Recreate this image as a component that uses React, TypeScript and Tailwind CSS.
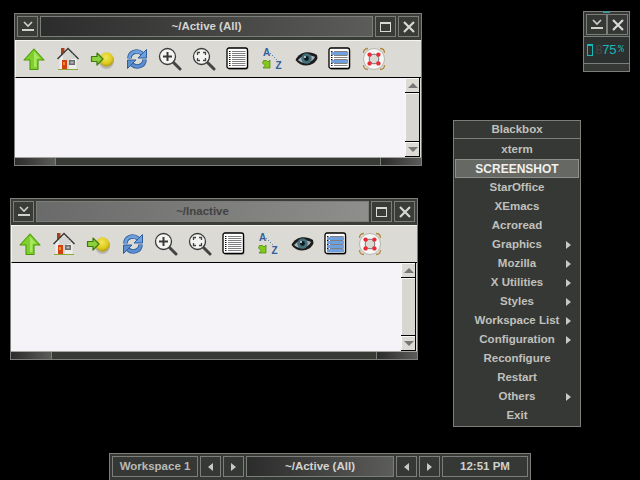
import React from "react";

const Up = () => (
  <svg width="24" height="24" viewBox="0 0 24 24">
    <path d="M12 2 L22 13 H16 V22.5 H8 V13 H2 Z" fill="#7fd02c" stroke="#4e9a06" strokeWidth="1.1" strokeLinejoin="round" />
    <path d="M12 4.5 L18 11.5 H14.5 V20 H12 Z" fill="#a8e860" />
  </svg>
);

const Home = () => (
  <svg width="24" height="24" viewBox="0 0 24 24">
    <rect x="5" y="1" width="3.5" height="7" fill="#a9401c" />
    <path d="M3.5 11 V22 H20.5 V11 L12 2.5 Z" fill="#ececea" />
    <path d="M1.5 12 L12 1.5 L22.5 12" fill="none" stroke="#3c3c3c" strokeWidth="1.5" />
    <path d="M8 6v7M10 5v8M12 4v18M14 5v8M16 6v6M18 8v4" stroke="#b4b4b0" strokeWidth="0.8" />
    <rect x="6" y="13" width="5" height="9" fill="#d2420e" />
    <rect x="7" y="15" width="2" height="3" fill="#f08a3a" />
    <rect x="13" y="13" width="6" height="5" fill="#6c6c6c" />
    <rect x="14.5" y="14.5" width="3" height="2" fill="#b8b8b8" />
    <path d="M2 22.5 H22" stroke="#8aa838" strokeWidth="1" />
  </svg>
);

const Go = () => (
  <svg width="24" height="24" viewBox="0 0 24 24">
    <defs>
      <radialGradient id="ball" cx="45%" cy="35%" r="70%">
        <stop offset="0" stopColor="#f2e660" />
        <stop offset="0.6" stopColor="#e0cc1c" />
        <stop offset="1" stopColor="#a08c10" />
      </radialGradient>
    </defs>
    <ellipse cx="16.5" cy="14.5" rx="7.5" ry="7.5" fill="#8a8a80" opacity="0.45" />
    <circle cx="16.5" cy="12.5" r="7.2" fill="url(#ball)" />
    <path d="M1.5 9.5 H7 V6 L13 12 L7 18 V14.5 H1.5 Z" fill="#8ad040" stroke="#3f7a08" strokeWidth="1.2" strokeLinejoin="round" />
  </svg>
);

const Refresh = () => (
  <svg width="24" height="24" viewBox="0 0 24 24">
    <path d="M5.5 11.5 C5.5 5 13 2.5 18 6.5" fill="none" stroke="#2f5f9f" strokeWidth="4.6" />
    <path d="M20.5 12.5 C20.5 19 13 21.5 8 17.5" fill="none" stroke="#2f5f9f" strokeWidth="4.6" />
    <path d="M5.5 11.5 C5.5 5 13 2.5 18 6.5" fill="none" stroke="#6f9fdc" strokeWidth="2.8" />
    <path d="M20.5 12.5 C20.5 19 13 21.5 8 17.5" fill="none" stroke="#5c8fd0" strokeWidth="2.8" />
    <path d="M22.5 2.5 V11 H14 Z" fill="#6f9fdc" stroke="#2f5f9f" strokeWidth="1" strokeLinejoin="round" />
    <path d="M3.5 21.5 V13 H12 Z" fill="#5c8fd0" stroke="#2f5f9f" strokeWidth="1" strokeLinejoin="round" />
  </svg>
);

const Zoom = ({ fit }: { fit?: boolean }) => (
  <svg width="24" height="24" viewBox="0 0 24 24">
    <path d="M15 15 L22 22" stroke="#444" strokeWidth="3" strokeLinecap="round" />
    <circle cx="9.5" cy="9.5" r="8" fill="#f4f4f2" stroke="#3a3a3a" strokeWidth="1.3" />
    {fit ? (
      <path d="M5.5 8V5.5H8M11 5.5H13.5V8M13.5 11V13.5H11M8 13.5H5.5V11" fill="none" stroke="#444" strokeWidth="1.3" />
    ) : (
      <path d="M9.5 5V14M5 9.5H14" stroke="#3a3a3a" strokeWidth="2" />
    )}
  </svg>
);

const List = ({ blue }: { blue?: number[] }) => (
  <svg width="24" height="24" viewBox="0 0 24 24">
    <rect x="2" y="2.5" width="20.5" height="20.5" rx="2" fill="#a8a8a4" />
    <rect x="1" y="1" width="20.5" height="20.5" rx="2" fill="#fff" stroke="#000" strokeWidth="1.3" />
    {[4, 6, 8, 10, 12, 14, 16, 18].map((y) => (
      <g key={y}>
        <rect x="3" y={y} width="1.5" height="1" fill="#111" />
        <rect x="6" y={y} width="13.5" height="1" fill="#808080" />
      </g>
    ))}
    {(blue || []).map((y) => (
      <rect key={y} x="3" y={y} width="17" height="3" fill="#6f9fdc" />
    ))}
  </svg>
);

const Sort = () => (
  <svg width="24" height="24" viewBox="0 0 24 24">
    <text x="3" y="8.5" fontFamily="'Liberation Sans', sans-serif" fontWeight="700" fontSize="10" fill="#2f5f9f">A</text>
    <text x="15.5" y="21.5" fontFamily="'Liberation Sans', sans-serif" fontWeight="700" fontSize="10" fill="#2f5f9f">Z</text>
    <path d="M10 6 L17 13" stroke="#2f5f9f" strokeWidth="1" strokeDasharray="1 2" />
    <path d="M3.5 13.5 L6.5 13.5 L8 15 L10 13 V21 H3 L5 18.5 L2.5 16 Z" fill="#84c81e" stroke="#4e8a06" strokeWidth="0.8" />
  </svg>
);

const Eye = () => (
  <svg width="24" height="24" viewBox="0 0 24 24">
    <path d="M1.5 13 C5 5 15 3 23 8 L23.5 11 C21 19 8 22 1.5 13 Z" fill="#1c1c1c" />
    <path d="M4 13 C8 8 15 7 21 10 C18 16 9 18 4 13 Z" fill="#a8b4b8" />
    <circle cx="12.5" cy="11.5" r="5.2" fill="#44707c" />
    <circle cx="12.5" cy="11.5" r="2.4" fill="#0c1a20" />
    <circle cx="11" cy="10" r="1" fill="#d8e8ec" />
  </svg>
);

const Buoy = () => (
  <svg width="24" height="24" viewBox="0 0 24 24">
    <path d="M1.5 6 Q1.5 1.5 6 1.5 M18 1.5 Q22.5 1.5 22.5 6 M22.5 18 Q22.5 22.5 18 22.5 M6 22.5 Q1.5 22.5 1.5 18" fill="none" stroke="#b08a40" strokeWidth="1.3" />
    <circle cx="12" cy="12" r="10.5" fill="#f6f6f4" stroke="#a8a8a4" strokeWidth="0.8" />
    <circle cx="12" cy="12" r="4.8" fill="#dcdad5" stroke="#777" strokeWidth="1" />
    <circle cx="7.6" cy="7.6" r="2.2" fill="#ea2c38" />
    <circle cx="16.4" cy="7.6" r="2.2" fill="#ea2c38" />
    <circle cx="7.6" cy="16.4" r="2.2" fill="#ea2c38" />
    <circle cx="16.4" cy="16.4" r="2.2" fill="#ea2c38" />
  </svg>
);

const IconifyMin = ({ color = "#d0d0cc" }: { color?: string }) => (
  <svg width="14" height="12" viewBox="0 0 14 12">
    <path d="M3 1 L7 5 L11 1" fill="none" stroke={color} strokeWidth="1.6" />
    <rect x="1" y="8" width="12" height="2" fill={color} />
  </svg>
);

const CloseX = ({ color = "#d8d8d4" }: { color?: string }) => (
  <svg width="12" height="12" viewBox="0 0 12 12">
    <path d="M1 1 L11 11 M11 1 L1 11" stroke={color} strokeWidth="2.2" />
  </svg>
);

const Btn = ({ children }: { children: React.ReactNode }) => (
  <div className="w-[21px] h-[21px] border border-[#7c7e7a] flex items-center justify-center shrink-0">{children}</div>
);

const Tri = ({ left }: { left?: boolean }) => (
  <svg width="5" height="8" viewBox="0 0 5 8" className="block">
    <path d={left ? "M5 0 V8 L0 4 Z" : "M0 0 V8 L5 4 Z"} fill="#c8c8c4" />
  </svg>
);

function Win({ className, title, inactive, bodyH, blue }: { className: string; title: string; inactive?: boolean; bodyH: string; blue: number[] }) {
  return (
    <div className={`absolute w-[408px] flex flex-col bg-[#3a3c38] border border-[#7c7e7a] ${className}`}>
      <div className="flex gap-[2px] h-[26px] pt-[2px] px-[2px]">
        <Btn><IconifyMin /></Btn>
        <div
          className={`flex-1 h-[21px] border border-[#7c7e7a] flex items-center justify-center text-[11.5px] font-bold bg-gradient-to-r ${
            inactive ? "from-[#6a6a6a] to-[#8e8e8c] text-[#424242]" : "from-[#2c2c2c] to-[#5c5c5a] text-[#d4d4d0]"
          }`}
        >
          {title}
        </div>
        <Btn><div className="w-[11px] h-[10px] border border-[#d8d8d4] border-t-2" /></Btn>
        <Btn><CloseX /></Btn>
      </div>
      <div className="h-[38px] bg-[#dcdad5] border-l border-t border-[#f4f4f0] border-b border-b-black flex items-center pl-[1px] shrink-0">
        {[<Up />, <Home />, <Go />, <Refresh />, <Zoom />, <Zoom fit />, <List />, <Sort />, <Eye />, <List blue={blue} />, <Buoy />].map((icon, i) => (
          <div key={i} className="w-[34px] flex justify-center">{icon}</div>
        ))}
      </div>
      <div className={`flex bg-[#f6f3f8] border-l border-r border-l-[#f4f4f0] border-r-[#dcdad5] ${bodyH}`}>
        <div className="flex-1" />
        <div className="w-[15px] flex flex-col gap-[1px] bg-black pr-[1px] pb-[1px]">
          <div className="h-[14px] bg-[#dcdad5] border-l border-t border-l-[#f8f8f4] border-t-[#f8f8f4] flex items-center justify-center">
            <div className="w-0 h-0 border-x-[5px] border-x-transparent border-b-[5px] border-b-[#777]" />
          </div>
          <div className="flex-1 bg-[#d8d6d1] border-l border-t border-[#f8f8f4]" />
          <div className="h-[14px] bg-[#dcdad5] border-l border-t border-l-[#f8f8f4] border-t-[#f8f8f4] flex items-center justify-center">
            <div className="w-0 h-0 border-x-[5px] border-x-transparent border-t-[5px] border-t-[#777]" />
          </div>
        </div>
      </div>
      <div className="h-[8px] flex border-t border-[#a4a4a0] bg-[#383a36] shrink-0">
        <div className="w-[41px] bg-gradient-to-r from-[#2c2c2c] to-[#5c5c5a] border-r border-[#7c7e7a]" />
        <div className="flex-1" />
        <div className="w-[41px] bg-gradient-to-r from-[#2c2c2c] to-[#5c5c5a] border-l border-[#7c7e7a]" />
      </div>
    </div>
  );
}

const items: [string, boolean][] = [
  ["xterm", false],
  ["SCREENSHOT", false],
  ["StarOffice", false],
  ["XEmacs", false],
  ["Acroread", false],
  ["Graphics", true],
  ["Mozilla", true],
  ["X Utilities", true],
  ["Styles", true],
  ["Workspace List", true],
  ["Configuration", true],
  ["Reconfigure", false],
  ["Restart", false],
  ["Others", true],
  ["Exit", false],
];

function Menu() {
  return (
    <div className="absolute left-[453px] top-[120px] w-[128px] bg-[#363836] border border-[#7c7e7a] text-[#c0c0bc] text-[11.5px] font-bold">
      <div className="h-[18px] flex items-center justify-center border-b border-[#7c7e7a]">Blackbox</div>
      <div className="pt-[1px] pb-[1px]">
        {items.map(([label, sub]) =>
          label === "SCREENSHOT" ? (
            <div key={label} className="h-[19px] mx-[1px] bg-[#666864] border border-[#8e908c] text-[#f0f0ec] text-[12px] flex items-center justify-center">
              {label}
            </div>
          ) : (
            <div key={label} className="relative h-[19px] flex items-center justify-center">
              {label}
              {sub ? (
                <span className="absolute right-[9px] top-[6px]">
                  <Tri />
                </span>
              ) : null}
            </div>
          )
        )}
      </div>
    </div>
  );
}

function Dock() {
  return (
    <div className="absolute left-[583px] top-[11px] w-[47px] h-[61px] bg-[#2c302e] border border-[#7c7e7a] flex flex-col">
      <div className="absolute -top-[1px] left-[19px] w-[7px] h-[2px] bg-[#3f9a9c]" />
      <div className="h-[25px] flex px-[2px] pt-[2px] bg-[#363836] border-b border-[#7c7e7a]">
        <Btn><IconifyMin /></Btn>
        <Btn><CloseX /></Btn>
      </div>
      <div className="h-[27px] flex items-center pl-[3px] border-b border-[#7c7e7a] leading-none font-['Liberation_Mono',monospace]">
        <div className="w-[6px] h-[12px] border border-[#16b8b8] border-t-2 shrink-0 mr-[2px]" />
        <span className="text-[13px] tracking-[-0.8px] text-[#444846]">8</span>
        <span className="text-[13px] tracking-[-0.8px] text-[#16b8b8]">75</span>
        <span className="ml-[2px] text-[10px] text-[#16b8b8]">%</span>
      </div>
      <div className="flex-1 bg-[#363836]" />
    </div>
  );
}

function Taskbar() {
  const cell = "h-[21px] border border-[#7c7e7a] flex items-center justify-center shrink-0";
  return (
    <div className="absolute left-[109px] top-[453px] w-[422px] h-[27px] bg-[#363836] border border-[#7c7e7a] border-b-0 flex gap-[2px] px-[2px] pt-[2px] text-[11.5px] font-bold text-[#b8b8b4]">
      <div className={`${cell} w-[86px]`}>Workspace 1</div>
      <div className={`${cell} w-[21px]`}><Tri left /></div>
      <div className={`${cell} w-[21px]`}><Tri /></div>
      <div className={`${cell} flex-1 bg-gradient-to-r from-[#2c2c2c] to-[#5c5c5a] text-[#d4d4d0]`}>~/Active (All)</div>
      <div className={`${cell} w-[21px]`}><Tri left /></div>
      <div className={`${cell} w-[21px]`}><Tri /></div>
      <div className={`${cell} w-[86px] text-[#d0d0cc]`}>12:51 PM</div>
    </div>
  );
}

export default function App() {
  return (
    <div className="relative w-[640px] h-[480px] bg-black overflow-hidden font-['Liberation_Sans',Arial,sans-serif]">
      <Win className="left-[14px] top-[13px]" title="~/Active (All)" bodyH="h-[79px]" blue={[5, 13]} />
      <Win className="left-[10px] top-[198px]" title="~/Inactive" inactive bodyH="h-[88px]" blue={[5, 9, 13, 17]} />
      <Dock />
      <Menu />
      <Taskbar />
    </div>
  );
}
